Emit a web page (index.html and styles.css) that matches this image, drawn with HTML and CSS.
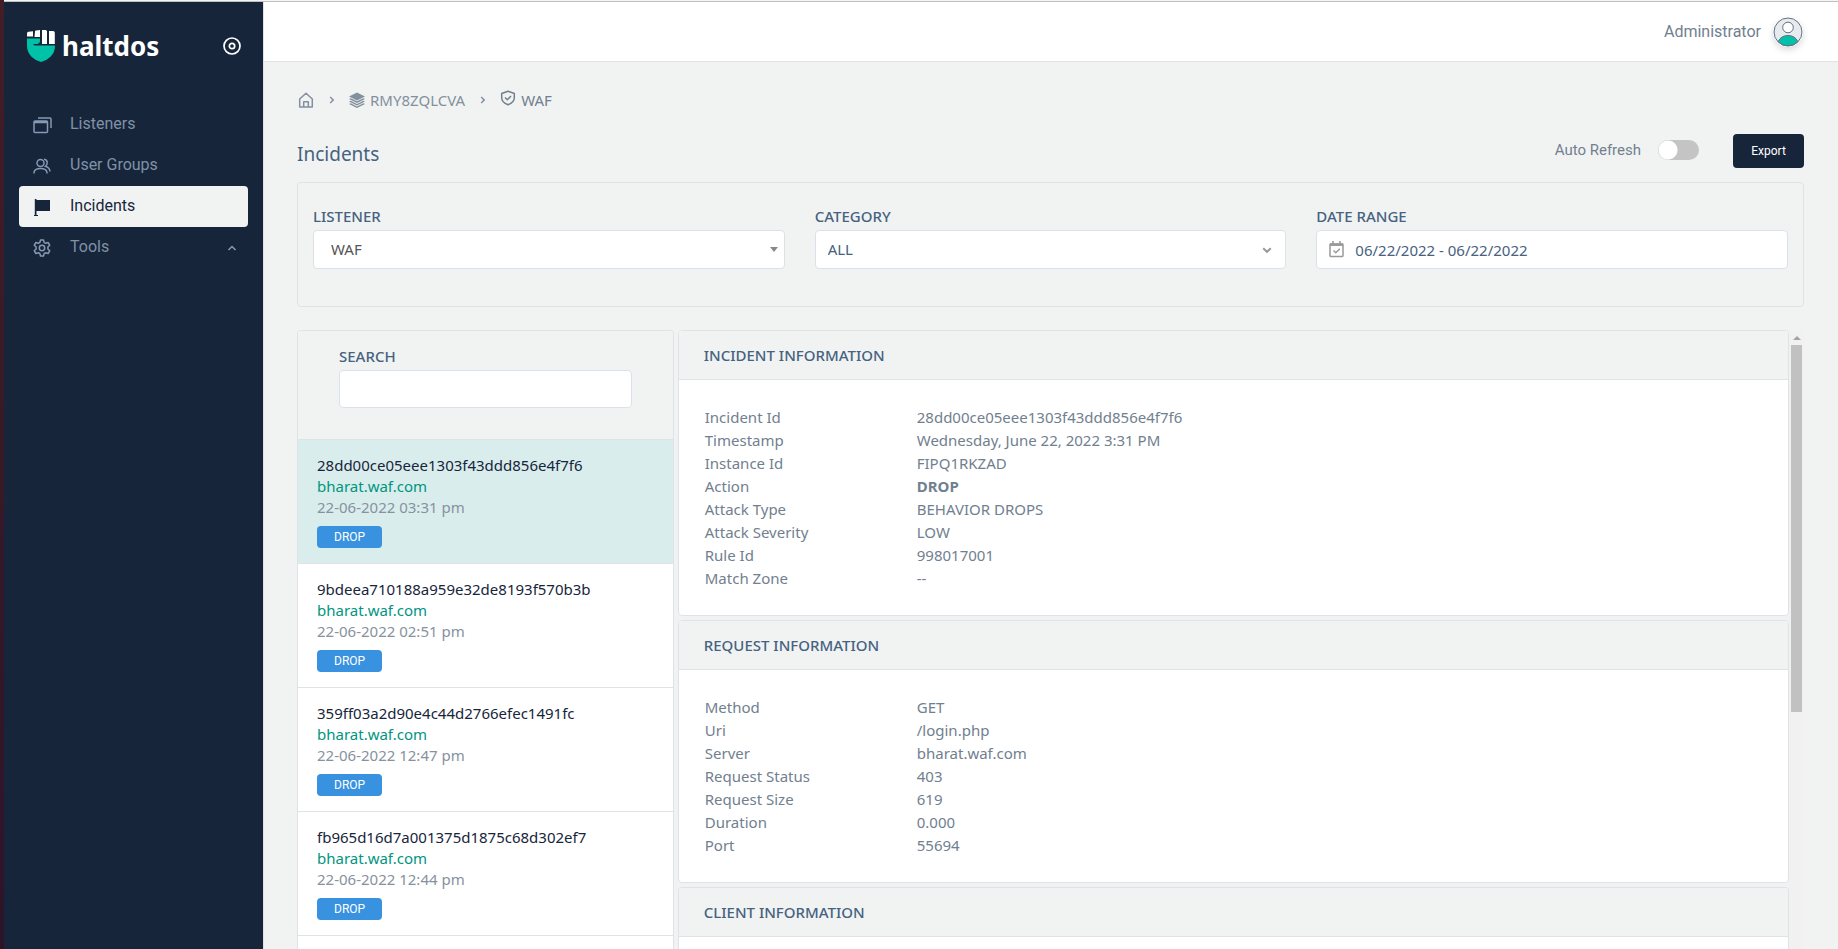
FILE: index.html
```html
<!DOCTYPE html>
<html lang="en">
<head>
<meta charset="utf-8">
<title>Haltdos - Incidents</title>
<link rel="stylesheet" href="styles.css">
</head>
<body>
<div class="app">
  <aside class="sidebar">
    <div class="brand">
      <a class="logo" href="#">
        <svg width="28" height="32" viewBox="0 0 28 32" aria-hidden="true">
          <path fill="#fff" d="M0 3.500Q0 2 1.500 1.800L6 1.300V6.500H0zM8 1.500Q8 .7 9 .6L13 0V7H7.500zM15 0h3.500q1.500 0 1.500 1.500V14h-5zM22 1h4q1.800 0 1.800 1.800V14H22z"/>
          <path fill="#00c2a8" d="M0 8.500h13v2.500q0 2.500-2.500 3H6l1.500 1.500H28q0 7-4.500 11.200Q19 31 14 32 9 31 4.500 26.700 0 22 0 15.500z"/>
        </svg>
        <span>haltdos</span>
      </a>
      <button class="pin" aria-label="Toggle sidebar">
        <svg width="18" height="18" viewBox="0 0 18 18" fill="none" stroke="#fff" stroke-width="1.700"><circle cx="9" cy="9" r="8"/><circle cx="9" cy="9" r="2.700"/></svg>
      </button>
    </div>
    <nav class="menu">
      <a class="item" href="#">
        <svg width="20" height="20" viewBox="0 0 20 20" fill="none" stroke="currentColor" stroke-width="1.500"><path d="M5 3h12q1 0 1 1v9M1 7.500h13"/><rect x="1" y="6" width="13.500" height="11.500" rx="1"/><path d="M1.500 7h12.500" stroke-width="2"/></svg>
        <span>Listeners</span>
      </a>
      <a class="item" href="#">
        <svg width="20" height="20" viewBox="0 0 20 20" fill="none" stroke="currentColor" stroke-width="1.500"><circle cx="7.500" cy="7" r="3.500"/><path d="M1 17.500v-1q.5-4 6.500-4t6.500 4v1M11 3.200q3.200.3 3.200 3.500 0 2.300-1.700 3.500 4.200 1.300 4.500 5.300"/></svg>
        <span>User Groups</span>
      </a>
      <a class="item active" href="#">
        <svg width="20" height="20" viewBox="0 0 20 20" fill="currentColor"><path d="M1.800 2h1.700v1H17v11H3.500v4H5v1H1v-1h.8z"/></svg>
        <span>Incidents</span>
      </a>
      <a class="item" href="#">
        <svg width="20" height="20" viewBox="0 0 20 20" fill="none" stroke="currentColor" stroke-width="1.500" stroke-linejoin="round"><path d="M7.500 2h3l.6 2.400 1.500.9 2.500-.8 1.600 2.700-1.800 1.800v2l1.800 1.800-1.600 2.700-2.500-.8-1.500.9-.6 2.400h-3l-.6-2.400-1.500-.9-2.500.8-1.600-2.700L3.100 11V9L1.300 7.200l1.600-2.700 2.500.8 1.500-.9z"/><circle cx="9" cy="10" r="2.700"/></svg>
        <span>Tools</span>
        <svg class="caret" width="10" height="8" viewBox="0 0 10 8" fill="none" stroke="currentColor" stroke-width="1.500"><path d="M1.500 6L5 2.500 8.500 6"/></svg>
      </a>
    </nav>
  </aside>

  <main class="main">
    <header class="topbar">
      <span>Administrator</span>
      <svg class="avatar" width="30" height="30" viewBox="0 0 30 30" stroke="#5f6f83"><circle cx="15" cy="15" r="14" fill="#e8ebee"/><circle cx="15" cy="10.500" r="5.300" fill="#fff"/><path fill="#00c2a8" d="M5.200 24.500Q8 18.500 15 18.500t9.800 6Q21 28.700 15 28.700t-9.800-4.200z"/></svg>
    </header>

    <div class="content">
      <nav class="crumbs" aria-label="Breadcrumb">
        <a href="#" aria-label="Home"><svg width="16" height="16" viewBox="0 0 16 16" fill="none" stroke="currentColor" stroke-width="1.500" stroke-linejoin="round"><path d="M1.700 7L8 1.200 14.300 7v8H1.700zM5.700 15V9.700h4.600V15"/></svg></a>
        <svg class="sep" width="6" height="8" viewBox="0 0 6 8" fill="none" stroke="currentColor" stroke-width="1.500"><path d="M1.200 1l3 3-3 3"/></svg>
        <a href="#"><svg width="16" height="16" viewBox="0 0 16 16" fill="currentColor"><path d="M8 .5L16 4.500 8 8.500 0 4.500z"/><path d="M0 7l1.800-.8L8 9.300l6.200-3.100L16 7l-8 4zM0 9.600l1.800-.8L8 11.900l6.200-3.100 1.800.8-8 4zM0 12.100l1.800-.8L8 14.400l6.200-3.100 1.800.8-8 3.900z"/></svg>RMY8ZQLCVA</a>
        <svg class="sep" width="6" height="8" viewBox="0 0 6 8" fill="none" stroke="currentColor" stroke-width="1.500"><path d="M1.200 1l3 3-3 3"/></svg>
        <span class="here"><svg width="16" height="20" viewBox="0 0 16 20" fill="none" stroke="currentColor" stroke-width="1.500" stroke-linejoin="round"><path d="M8 1.200l6.300 2.300v4.300q0 4.700-6.300 7-6.300-2.300-6.300-7V3.500zM5 7.500l2.300 2.300L11 6"/></svg>WAF</span>
      </nav>

      <div class="titlebar">
        <h1>Incidents</h1>
        <div class="actions">
          <label for="refresh">Auto Refresh</label>
          <input class="switch" type="checkbox" id="refresh">
          <button class="export">Export</button>
        </div>
      </div>

      <section class="filters">
        <div class="field">
          <label for="listener">LISTENER</label>
          <div class="control">
            <select id="listener" class="dark"><option>WAF</option></select>
            <svg class="arrow near" width="8" height="5" viewBox="0 0 8 5"><path fill="#888" d="M0 0h8L4 5z"/></svg>
          </div>
        </div>
        <div class="field">
          <label for="category">CATEGORY</label>
          <div class="control">
            <select id="category"><option>ALL</option></select>
            <svg class="arrow" width="10" height="7" viewBox="0 0 10 7" fill="none" stroke="#999" stroke-width="2"><path d="M1.200 1.200L5 4.800l3.800-3.600"/></svg>
          </div>
        </div>
        <div class="field">
          <label for="range">DATE RANGE</label>
          <div class="control">
            <svg class="calendar" width="15" height="17" viewBox="0 0 15 17" fill="none" stroke="#999" stroke-width="1.500"><rect x="1" y="3" width="13" height="12.500" rx=".7"/><path d="M1 3.700h13" stroke-width="2.500"/><path d="M4 0v3M11 0v3M4.500 9.500l2.300 2.200 4-4"/></svg>
            <input id="range" class="date" type="text" value="06/22/2022 - 06/22/2022">
          </div>
        </div>
      </section>

      <div class="split">
        <section class="list">
          <div class="search">
            <label for="search">SEARCH</label>
            <input id="search" type="text">
          </div>
          <article class="entry selected"><h2>28dd00ce05eee1303f43ddd856e4f7f6</h2><a href="#">bharat.waf.com</a><p>22-06-2022 03:31 pm</p><span class="badge">DROP</span></article>
          <article class="entry"><h2>9bdeea710188a959e32de8193f570b3b</h2><a href="#">bharat.waf.com</a><p>22-06-2022 02:51 pm</p><span class="badge">DROP</span></article>
          <article class="entry"><h2>359ff03a2d90e4c44d2766efec1491fc</h2><a href="#">bharat.waf.com</a><p>22-06-2022 12:47 pm</p><span class="badge">DROP</span></article>
          <article class="entry"><h2>fb965d16d7a001375d1875c68d302ef7</h2><a href="#">bharat.waf.com</a><p>22-06-2022 12:44 pm</p><span class="badge">DROP</span></article>
        </section>

        <div class="details">
          <section class="card">
            <h2>INCIDENT INFORMATION</h2>
            <table>
              <tr><th scope="row">Incident Id</th><td>28dd00ce05eee1303f43ddd856e4f7f6</td></tr>
              <tr><th scope="row">Timestamp</th><td>Wednesday, June 22, 2022 3:31 PM</td></tr>
              <tr><th scope="row">Instance Id</th><td>FIPQ1RKZAD</td></tr>
              <tr><th scope="row">Action</th><td><b>DROP</b></td></tr>
              <tr><th scope="row">Attack Type</th><td>BEHAVIOR DROPS</td></tr>
              <tr><th scope="row">Attack Severity</th><td>LOW</td></tr>
              <tr><th scope="row">Rule Id</th><td>998017001</td></tr>
              <tr><th scope="row">Match Zone</th><td>--</td></tr>
            </table>
          </section>
          <section class="card">
            <h2>REQUEST INFORMATION</h2>
            <table>
              <tr><th scope="row">Method</th><td>GET</td></tr>
              <tr><th scope="row">Uri</th><td>/login.php</td></tr>
              <tr><th scope="row">Server</th><td>bharat.waf.com</td></tr>
              <tr><th scope="row">Request Status</th><td>403</td></tr>
              <tr><th scope="row">Request Size</th><td>619</td></tr>
              <tr><th scope="row">Duration</th><td>0.000</td></tr>
              <tr><th scope="row">Port</th><td>55694</td></tr>
            </table>
          </section>
          <section class="card last">
            <h2>CLIENT INFORMATION</h2>
          </section>
        </div>
        <div class="scrollbar" aria-hidden="true">
          <svg width="8" height="4" viewBox="0 0 8 4"><path fill="#a3a3a3" d="M0 4h8L4 0z"/></svg>
          <div class="thumb"></div>
        </div>
      </div>
    </div>
  </main>
</div>
</body>
</html>
```

FILE: styles.css
```css
* { box-sizing: border-box; }

body {
  margin: 0;
  font: 15px/23px "Noto Sans", "Liberation Sans", sans-serif;
  color: #71808f;
  background: linear-gradient(#421e27, #2c1428);
}

h1, h2, p { margin: 0; font-weight: 400; }
a { color: inherit; text-decoration: none; }
svg { flex: none; display: block; }
button { border: 0; padding: 0; }

.app {
  display: flex;
  height: 100vh;
  margin-left: 4px;
  border-top: 1px solid #f4f4f4;
  box-shadow: inset 0 1px #bfc0c1;
  padding-top: 1px;
  overflow: hidden;
  background-color: #f1f3f3;
}

/* Sidebar */
.sidebar {
  flex: 0 0 260px;
  background: #17253b;
  border-right: 1px solid #dfe3e8;
}
.brand {
  display: flex;
  justify-content: space-between;
  align-items: center;
  height: 87px;
  padding: 0 22px 0 23px;
}
.logo {
  display: flex;
  align-items: center;
  gap: 7px;
  color: #fff;
  font-size: 26px;
  font-weight: 700;
  line-height: 32px;
}
.pin { background: none; }
.menu {
  display: flex;
  flex-direction: column;
  padding: 15px 15px 0;
}
.item {
  display: flex;
  align-items: center;
  gap: 17px;
  height: 41px;
  padding: 0 11px 0 14px;
  border-radius: 4px;
  color: #7f92a6;
  font: 16px/24px Roboto, "Liberation Sans", sans-serif;
}
.item span { padding-bottom: 2px; }
.item svg { color: #8599b3; }
.item.active, .item.active svg {
  background: #f1f3f3;
  color: #17253b;
}
.item .caret { margin-left: auto; }

/* Header */
.main {
  flex: 1;
  min-width: 0;
  display: flex;
  flex-direction: column;
}
.topbar {
  flex: 0 0 60px;
  display: flex;
  justify-content: flex-end;
  align-items: center;
  gap: 12px;
  padding-right: 35px;
  background: #fff;
  border-bottom: 1px solid #dfe3e6;
  font: 16px/24px Roboto, "Liberation Sans", sans-serif;
}
.avatar {
  border-radius: 50%;
  box-shadow: 0 3px 6px rgba(0, 0, 0, .15);
}
.content {
  flex: 1;
  min-height: 0;
  display: flex;
  flex-direction: column;
  padding: 26px 34px 0 33px;
}
.crumbs {
  display: flex;
  align-items: center;
  height: 24px;
  padding-left: 1px;
  gap: 14px;
  color: #83909d;
}
.crumbs a, .here {
  display: flex;
  align-items: center;
  gap: 5px;
}
.here { color: #71808f; }
.sep { margin: 0 0 0 1px; }

/* Title row */
.titlebar {
  display: flex;
  justify-content: space-between;
  align-items: flex-end;
  margin: 22px 0 14px;
}
h1 {
  font-size: 19px;
  line-height: 28px;
  color: #46627f;
}
.actions {
  display: flex;
  align-items: center;
  font: 15px/24px Roboto, "Liberation Sans", sans-serif;
}
.actions label { margin-bottom: 3px; }
.switch {
  appearance: none;
  width: 41px;
  height: 20px;
  margin: 0 34px 3px 17px;
  border-radius: 10px;
  background: radial-gradient(circle at 10px 10px, #fff 9px, transparent 10px) #c4c4c4;
}
.export {
  width: 71px;
  height: 34px;
  border-radius: 4px;
  background: #17253b;
  color: #fff;
  font: 12px/16px Roboto, "Liberation Sans", sans-serif;
}

/* Filters */
.filters {
  display: grid;
  grid-template-columns: repeat(3, 1fr);
  gap: 30px;
  padding: 23px 15px 37px;
  margin-bottom: 23px;
  border: 1px solid #dfe3e8;
  border-radius: 4px;
}
label { display: block; }
.field label, .search label {
  line-height: 21px;
  margin-bottom: 3px;
  font-size: 15px;
  font-weight: 500;
  color: #46627f;
}
.control { position: relative; }
select, input[type="text"] {
  appearance: none;
  display: block;
  width: 100%;
  height: 39px;
  padding: 0 12px;
  border: 1px solid #dce0e8;
  border-radius: 4px;
  background: #fff;
  color: #46627f;
  font: 15px/23px "Noto Sans", "Liberation Sans", sans-serif;
}
select.dark { padding: 0 17px; color: #555; }
input.date { padding-left: 38px; }
.arrow {
  position: absolute;
  top: 17px;
  right: 14px;
}
.arrow.near { right: 7px; }
.calendar {
  position: absolute;
  top: 11px;
  left: 13px;
}

/* Incident list */
.split {
  flex: 1;
  min-height: 0;
  display: flex;
  overflow: hidden;
}
.list {
  flex: 0 0 25%;
  margin-right: 4px;
  border: 1px solid #dfe3e8;
  border-bottom: 0;
  border-radius: 4px 4px 0 0;
  background: #fff;
  overflow: hidden;
}
.search {
  padding: 15px 41px 31px;
  background: #f1f3f3;
  border-bottom: 1px solid #dfe3e8;
}
.search input { height: 38px; }
.entry {
  display: flex;
  flex-direction: column;
  align-items: flex-start;
  padding: 15px 19px;
  border-bottom: 1px solid #dfe3e8;
  line-height: 21px;
}
.entry h2 { font-size: 15px; color: #17253b; }
.entry a { color: #00957f; }
.entry p { color: #87929e; }
.selected { background: #d9eded; }
.badge {
  margin-top: 8px;
  padding: 0 17px;
  border-radius: 4px;
  background: #3892df;
  color: #fff;
  font: 12px/22px Roboto, "Liberation Sans", sans-serif;
}

/* Details */
.details {
  flex: 1;
  min-width: 0;
  display: flex;
  flex-direction: column;
  gap: 4px;
}
.card {
  flex: none;
  border: 1px solid #dfe3e8;
  border-radius: 4px;
  background: #fff;
}
.card.last {
  flex: 1 0 64px;
  border-bottom: 0;
  border-radius: 4px 4px 0 0;
}
.card h2 {
  padding: 0 25px;
  font-size: 15px;
  font-weight: 500;
  line-height: 48px;
  color: #46627f;
  background: #f1f3f3;
  border-bottom: 1px solid #dfe3e8;
  border-radius: 4px 4px 0 0;
}
table {
  margin: 26px 26px 25px;
  border-spacing: 0;
}
th, td {
  padding: 0;
  text-align: left;
  font-weight: 400;
}
th { width: 212px; }
.scrollbar {
  flex: 0 0 15px;
  padding: 6px 2px 0;
  background: #f1f1f1;
}
.scrollbar svg { margin: 0 auto 5px; }
.thumb { height: 367px; background: #c1c1c1; }
```
